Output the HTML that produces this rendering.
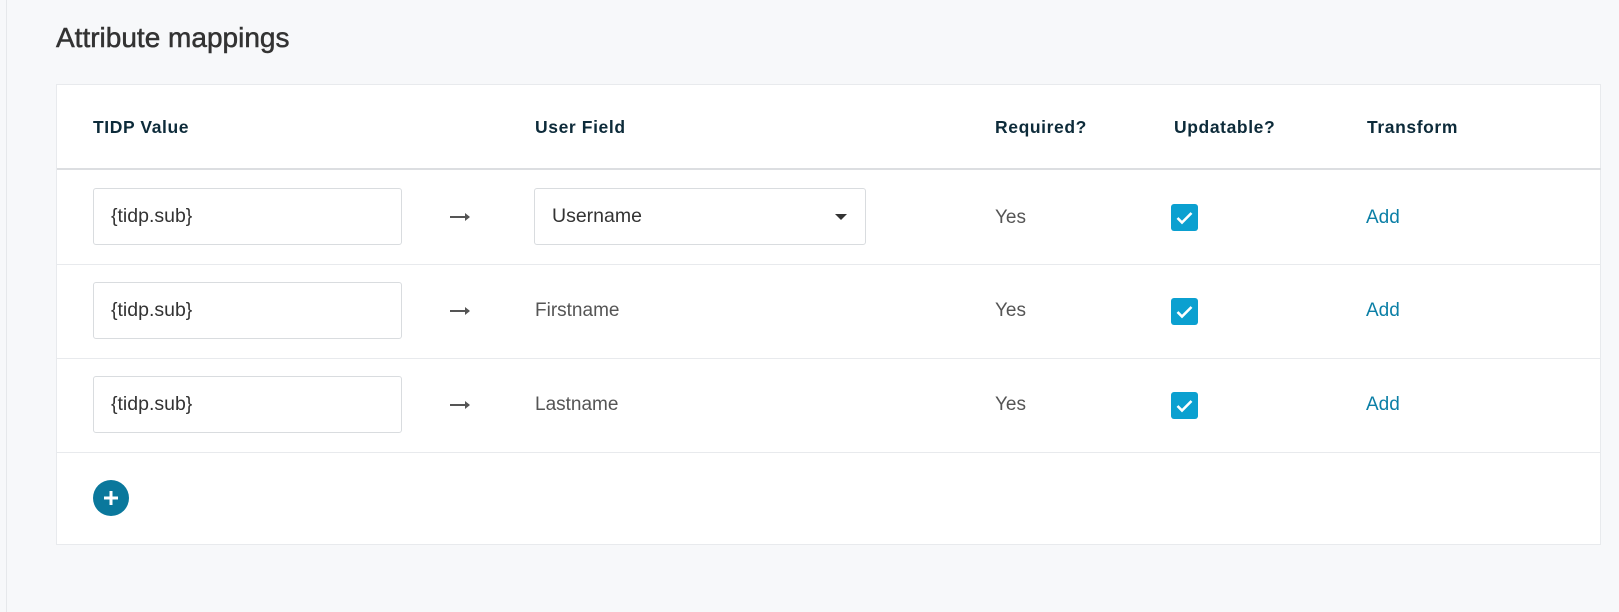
<!DOCTYPE html>
<html><head><style>
body{margin:0;width:1619px;height:612px;background:#f7f8fa;font-family:"Liberation Sans",sans-serif;position:relative;overflow:hidden}
.a{position:absolute}
.vl{left:6px;top:0;width:1px;height:612px;background:#e6e8eb}
h1{position:absolute;left:56px;top:22px;margin:0;font-size:28px;font-weight:normal;color:#333;-webkit-text-stroke:0.5px #333}
.card{left:56px;top:84px;width:1545px;height:461px;background:#fff;border:1px solid #e8eaed;box-sizing:border-box}
.th{top:117px;font-size:17.5px;font-weight:bold;color:#0d2b3a;letter-spacing:.6px}
.hr{left:57px;width:1544px;height:1px;background:#e8eaed}
.inp{left:93px;width:309px;height:57px;border:1px solid #d9dcdf;border-radius:3px;box-sizing:border-box;font-size:19.5px;color:#333;padding-left:17px;line-height:55px;background:#fff}
.sel{left:534px;width:332px}
.txt{font-size:19px;color:#555}
.arr{left:450px;width:19px;height:2px;background:#555}
.arr:after{content:"";position:absolute;right:-1px;top:-3px;border-left:5px solid #555;border-top:4px solid transparent;border-bottom:4px solid transparent}
.cb{left:1171px;width:27px;height:27px;background:#0ba0d0;border-radius:3px}
.add{left:1366px;font-size:19px;color:#0b7fa6}
</style></head><body>
<div class="a vl"></div>
<h1>Attribute mappings</h1>
<div class="a card"></div>
<div class="a th" style="left:93px">TIDP Value</div>
<div class="a th" style="left:535px">User Field</div>
<div class="a th" style="left:995px">Required?</div>
<div class="a th" style="left:1174px">Updatable?</div>
<div class="a th" style="left:1367px">Transform</div>
<div class="a hr" style="top:168px;height:2px;background:#dcdee1"></div>
<div class="a hr" style="top:264px"></div>
<div class="a hr" style="top:358px"></div>
<div class="a hr" style="top:452px"></div>

<div class="a inp" style="top:188px">{tidp.sub}</div>
<div class="a inp" style="top:282px">{tidp.sub}</div>
<div class="a inp" style="top:376px">{tidp.sub}</div>

<div class="a arr" style="top:216px"></div>
<div class="a arr" style="top:310px"></div>
<div class="a arr" style="top:404px"></div>

<div class="a inp sel" style="top:188px">Username<span style="position:absolute;right:18px;top:25px;border-top:6px solid #333;border-left:6px solid transparent;border-right:6px solid transparent"></span></div>
<div class="a txt" style="left:535px;top:300px">Firstname</div>
<div class="a txt" style="left:535px;top:394px">Lastname</div>

<div class="a txt" style="left:995px;top:207px">Yes</div>
<div class="a txt" style="left:995px;top:300px">Yes</div>
<div class="a txt" style="left:995px;top:394px">Yes</div>

<svg class="a cb" style="top:204px" viewBox="0 0 27 27"><path d="M6.5 14l4.5 4.5L20.5 9" fill="none" stroke="#fff" stroke-width="2.6"/></svg>
<svg class="a cb" style="top:298px" viewBox="0 0 27 27"><path d="M6.5 14l4.5 4.5L20.5 9" fill="none" stroke="#fff" stroke-width="2.6"/></svg>
<svg class="a cb" style="top:392px" viewBox="0 0 27 27"><path d="M6.5 14l4.5 4.5L20.5 9" fill="none" stroke="#fff" stroke-width="2.6"/></svg>

<div class="a add" style="top:207px">Add</div>
<div class="a add" style="top:300px">Add</div>
<div class="a add" style="top:394px">Add</div>

<svg class="a" style="left:93px;top:480px" width="36" height="36" viewBox="0 0 36 36"><circle cx="18" cy="18" r="18" fill="#0a789c"/><path d="M18 11v14M11 18h14" stroke="#fff" stroke-width="3"/></svg>
</body></html>
